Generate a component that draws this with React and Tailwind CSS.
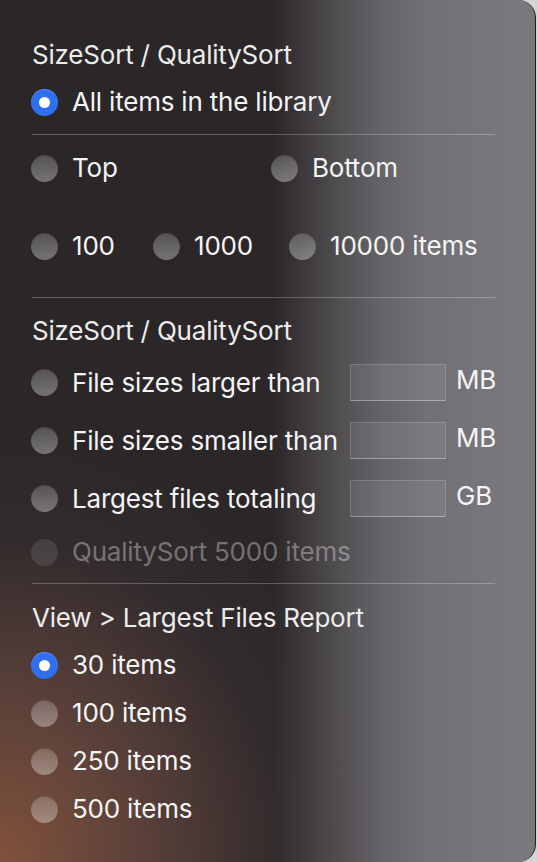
import React from 'react';

// Radio dot, macOS style
function Radio({ checked = false, disabled = false }) {
  if (checked) {
    return (
      <span className="flex h-[27px] w-[27px] shrink-0 items-center justify-center rounded-full bg-[#2f6ff0] shadow-[inset_0_1px_0_rgba(255,255,255,0.2)]">
        <span className="h-[11px] w-[11px] rounded-full bg-white" />
      </span>
    );
  }
  return (
    <span
      className={`h-[27px] w-[27px] shrink-0 rounded-full ${
        disabled
          ? 'bg-white/10'
          : 'bg-gradient-to-b from-white/20 to-white/35 shadow-[inset_0_1px_1px_rgba(0,0,0,0.15)]'
      }`}
    />
  );
}

function Option({ label, checked, disabled, className = '' }) {
  return (
    <div className={`flex h-[32px] items-center gap-[14px] ${className}`}>
      <Radio checked={checked} disabled={disabled} />
      <span className={disabled ? 'text-white/35' : 'text-[#f4f4f4]'}>{label}</span>
    </div>
  );
}

function SizeRow({ label, unit, className = '' }) {
  return (
    <div className={`flex h-[37px] items-center ${className}`}>
      <div className="flex w-[319px] items-center gap-[14px]">
        <Radio />
        <span className="whitespace-nowrap text-[#f4f4f4]">{label}</span>
      </div>
      <div className="h-[37px] w-[96px] border border-white/15 border-b-white/35 bg-white/[0.07]" />
      <span className="ml-[10px] self-start leading-[32px] text-[#f4f4f4]">{unit}</span>
    </div>
  );
}

function Header({ children, className = '' }) {
  return <div className={`h-[32px] leading-[32px] text-[#ececec] ${className}`}>{children}</div>;
}

function Divider({ className = '' }) {
  return <div className={`h-px w-[463px] bg-white/25 ${className}`} />;
}

export default function App() {
  return (
    <div className="h-[862px] w-[538px] overflow-hidden bg-[#d4d4d4]">
      <div className="relative h-[862px] w-[536px] overflow-hidden rounded-r-[18px] border-r border-[#1c1c1c] bg-[linear-gradient(90deg,#2b2729_0%,#2b2729_51%,#3a3639_56%,#504d51_63%,#656367_71%,#727075_80%,#78767b_92%,#7a787d_100%)] font-['Inter','Noto_Sans',sans-serif] text-[26px] leading-[32px] tracking-[-0.2px]">
        {/* warm tint bottom-left, as in the blurred desktop behind */}
        <div className="pointer-events-none absolute inset-0 bg-[radial-gradient(ellipse_70%_50%_at_0%_100%,rgba(134,84,60,0.95)_0%,rgba(118,80,68,0.6)_40%,rgba(80,60,60,0.2)_75%,rgba(80,60,60,0)_100%)]" />
        <div className="relative pl-[31px] pt-[39px]">
          <Header className="pl-px">SizeSort / QualitySort</Header>
          <Option checked label="All items in the library" className="mt-[15px]" />
          <Divider className="ml-px mt-[16px]" />

          <div className="mt-[17px] flex">
            <Option label="Top" className="w-[240px]" />
            <Option label="Bottom" />
          </div>
          <div className="mt-[46px] flex">
            <Option label="100" className="w-[122px]" />
            <Option label="1000" className="w-[136px]" />
            <Option label="10000 items" />
          </div>
          <Divider className="ml-px mt-[35px]" />

          <Header className="mt-[17px] pl-px">SizeSort / QualitySort</Header>
          <SizeRow label="File sizes larger than" unit="MB" className="mt-[17px]" />
          <SizeRow label="File sizes smaller than" unit="MB" className="mt-[21px]" />
          <SizeRow label="Largest files totaling" unit="GB" className="mt-[21px]" />
          <Option disabled label="QualitySort 5000 items" className="mt-[19px]" />
          <Divider className="ml-px mt-[15px]" />

          <Header className="mt-[18px] pl-px">View &gt; Largest Files Report</Header>
          <Option checked label="30 items" className="mt-[15px]" />
          <Option label="100 items" className="mt-[16px]" />
          <Option label="250 items" className="mt-[16px]" />
          <Option label="500 items" className="mt-[16px]" />
        </div>
      </div>
    </div>
  );
}
